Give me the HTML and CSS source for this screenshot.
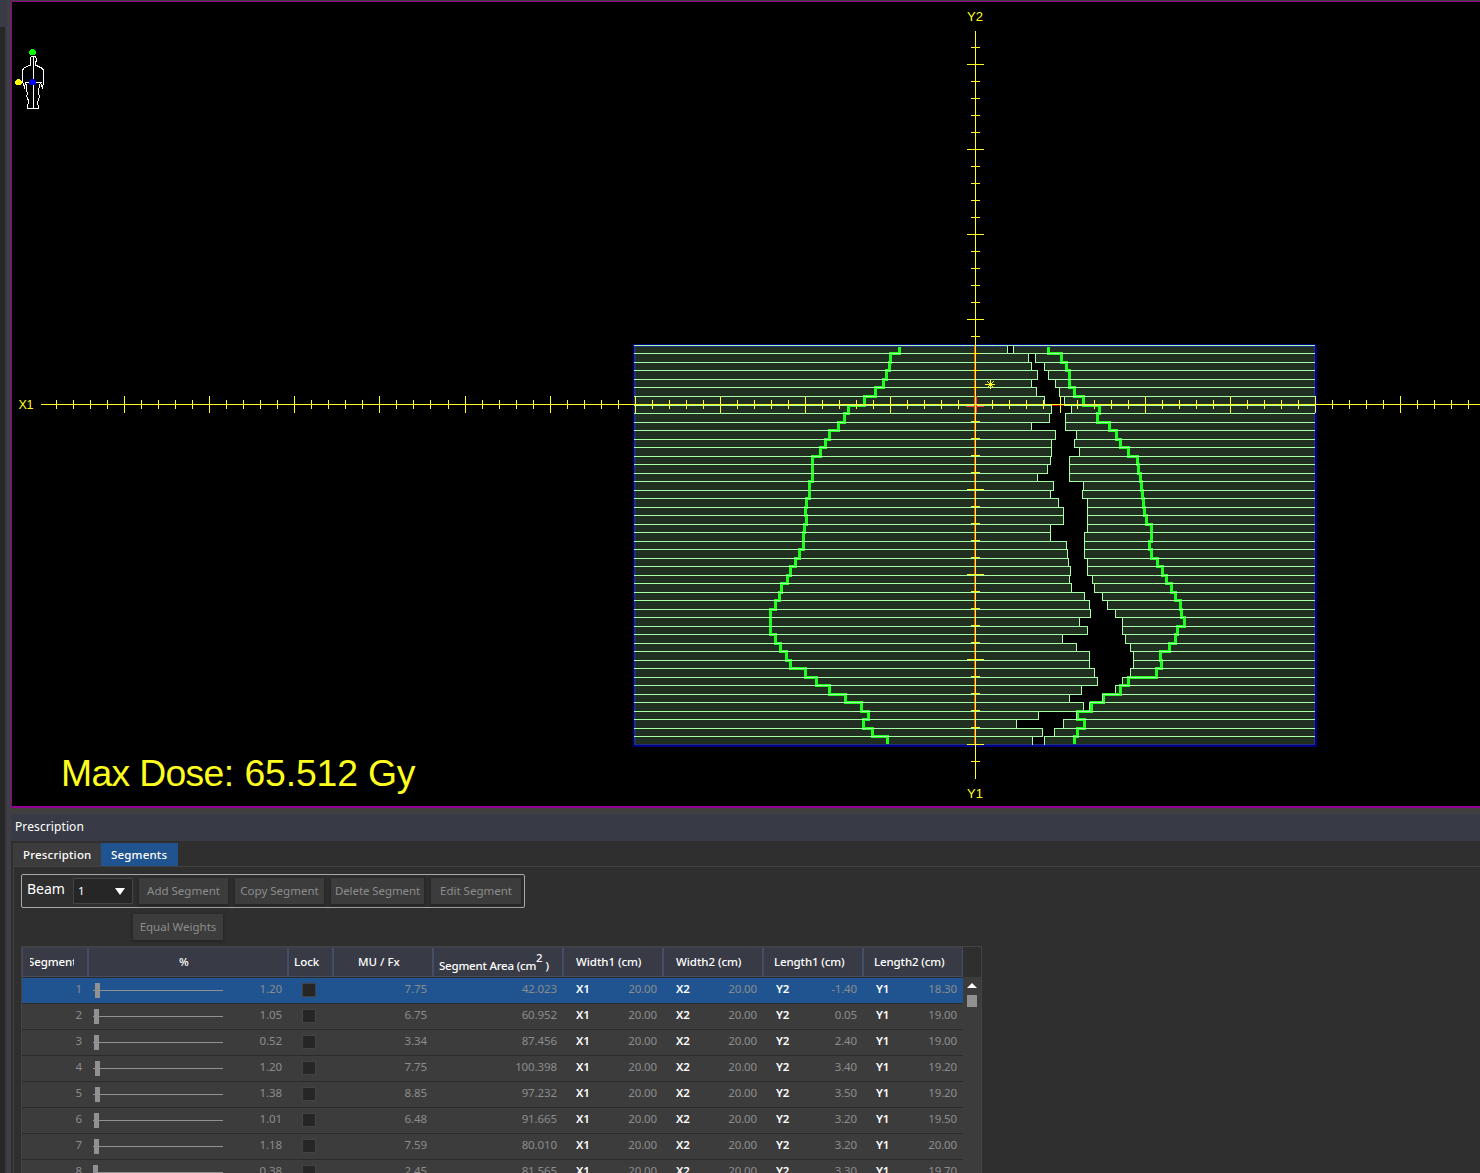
FILE: index.html
```html
<!DOCTYPE html>
<html lang="en">
<head>
<meta charset="utf-8">
<title>Prescription - Segments</title>
<link rel="stylesheet" href="styles.css">
</head>
<body>
<div class="app">
  <div class="rail"><div class="rail-head"></div></div>
  <div class="rail-edge"></div>
  <div class="gutter"></div>
  <main class="main">
    <section class="view">
      <svg class="bev" id="bev" width="1468" height="804" viewBox="12 2 1468 804"></svg>
    </section>
    <div class="splitter"></div>
    <header class="panel-title"><span class="t-title">Prescription</span></header>
    <nav class="tabs">
      <div class="tab tab-rx"><span>Prescription</span></div>
      <div class="tab tab-seg active"><span>Segments</span></div>
    </nav>
    <section class="panel">
      <div class="toolbar">
        <label class="beam-label">Beam</label>
        <div class="select"><span>1</span><svg width="10" height="7" viewBox="0 0 10 7"><path d="M0 0H10L5 7Z" fill="#fff"/></svg></div>
        <button class="btn b-add">Add Segment</button>
        <button class="btn b-copy">Copy Segment</button>
        <button class="btn b-del">Delete Segment</button>
        <button class="btn b-edit">Edit Segment</button>
      </div>
      <button class="btn b-equal">Equal Weights</button>
      <div class="table">
        <div class="grid">
          <div class="row head">
            <div class="h-seg"><span class="clip"><span>Segment</span></span></div>
            <div class="h-pct">%</div>
            <div class="h-lock">Lock</div>
            <div class="h-mu">MU / Fx</div>
            <div class="h-area">Segment Area (cm<sup>2</sup><i>)</i></div>
            <div class="h-w">Width1 (cm)</div>
            <div class="h-w">Width2 (cm)</div>
            <div class="h-l">Length1 (cm)</div>
            <div class="h-l h-last">Length2 (cm)</div>
          </div>
          <div id="rows"></div>
        </div>
        <div class="scroll">
          <div class="scroll-top"></div>
          <div class="scroll-track">
            <svg width="10" height="5" viewBox="0 0 10 5"><path d="M0 5H10L5 0Z" fill="#fff"/></svg>
            <div class="thumb"></div>
          </div>
        </div>
      </div>
    </section>
  </main>
</div>
<script src="app.js"></script>
</body>
</html>
```
FILE: styles.css
```css
* { box-sizing: border-box; }
body {
  margin: 0;
  width: 1480px;
  height: 1173px;
  overflow: hidden;
  background: #2f2f2f;
  color: #fff;
  font: 11.5px/16px "Noto Sans", "Open Sans", sans-serif;
}
.app { display: flex; height: 1173px; }
.rail { width: 5px; background: #272727; }
.rail-head { height: 27px; background: #383b45; }
.rail-edge { width: 2px; background: #383b45; }
.gutter { width: 4px; background: #403f41; }
.main { flex: 1; display: flex; flex-direction: column; min-width: 0; }
.view {
  height: 808px;
  border-top: 1px solid #404040;
  border-bottom: 1px solid #930093;
  background: #000;
  box-shadow: inset 1px 1px 0 #930093, inset 0 -1px 0 #930093;
  padding: 1px 0 0 1px;
  flex: none;
}
.bev { display: block; }
.bev text { font-family: "Liberation Sans", Arial, sans-serif; fill: #ffff1e; }
.splitter { height: 6px; flex: none; background: #404040; }
.panel-title { height: 27px; flex: none; background: #383b45; padding: 5px 0 0 4px; }
.t-title { font-size: 12px; letter-spacing: .1px; }
.tabs { height: 25px; flex: none; padding: 2px 0 0 2px; display: flex; }
.tab { height: 23px; padding-top: 4px; font-weight: 500; background: #3c3c3c; letter-spacing: .18px; }
.tab-rx { width: 88px; padding-left: 10px; }
.tab-seg { width: 77px; padding-left: 10px; }
.tab.active { background: #1f5490; }
.panel {
  flex: 1;
  margin-left: 2px;
  border-top: 1px solid #414141;
  border-left: 1px solid #414141;
  padding: 7px 0 0 7px;
  min-height: 0;
}
.toolbar {
  width: 504px;
  height: 34px;
  border: 1px solid #a8a8a8;
  border-radius: 2px;
  display: flex;
  align-items: flex-start;
  padding: 3px 0 0 5px;
}
.toolbar > * { flex: none; }
.beam-label { width: 46px; font-size: 14px; line-height: 22px; }
.select {
  width: 60px; height: 26px;
  background: #262626;
  border: 1px solid #434343;
  display: flex; align-items: center; justify-content: space-between;
  padding: 0 7px 0 4px;
  margin-right: 6px;
}
.btn {
  height: 26px;
  border: 0;
  padding: 0 0 1px;
  background: #3c3c3c;
  color: #8c8c8c;
  font: inherit;
  line-height: 25px;
  white-space: nowrap;
  box-shadow: 0 1px 2px 1px #262626;
}
.toolbar .btn { margin-right: 7px; }
.b-add, .b-copy { width: 89px; }
.b-del { width: 93px; letter-spacing: -.08px; }
.toolbar .b-edit { width: 90px; margin-right: 0; }
.b-equal { display: block; width: 90px; margin: 6px 0 6px 112px; }
.table {
  width: 961px;
  height: 260px;
  border: 1px solid #434343;
  display: flex;
}
.grid { width: 941px; }
.row {
  display: grid;
  grid-template-columns: 66px 200px 45px 100px 130px 100px 100px 100px 100px;
  height: 26px;
  border-bottom: 1px solid #2b2b2b;
  background: #3c3c3c;
  color: #8c8c8c;
}
.row.selected { background: #1f5490; }
.row.head {
  height: 31px;
  background: #383b45;
  border-left: 1px solid #454c62;
  grid-template-columns: 66px 200px 45px 100px 130px 100px 100px 100px 99px;
  border-bottom: 1px solid #2b2b2b;
  border-top: 1px solid #3f424a;
  color: #fff;
  font-weight: 500;
}
.head > div {
  border-right: 2px solid #454e66;
  border-bottom: 1px solid #454c62;
  height: 29px;
  padding-top: 6px;
  white-space: nowrap;
}
.head > .h-last { border-right-width: 1px; }
.h-seg { padding-left: 7px; }
.clip { display: block; width: 44px; overflow: hidden; }
.clip span { margin-left: -2px; letter-spacing: -.1px; }
.h-pct { padding-left: 90px; }
.h-lock { padding-left: 5px; }
.h-mu { padding-left: 24px; }
.head > .h-area { padding: 10px 0 0 5px; letter-spacing: -.22px; }
.h-area sup { font-size: 11.5px; line-height: 0; vertical-align: 8px; }
.h-area i { font-style: normal; margin-left: 3px; }
.h-w { padding-left: 12px; letter-spacing: -.05px; }
.h-l { padding-left: 10px; letter-spacing: -.12px; }
.num { text-align: right; padding: 3px 6px 0 0; letter-spacing: -.1px; }
.pct { display: flex; align-items: flex-start; padding-left: 5px; }
.slider { display: block; }
.pct .num { margin-left: auto; }
.check { width: 14px; height: 14px; margin: 5px 0 0 14px; background: #262626; border: 1px solid #434343; }
.pair { display: flex; justify-content: space-between; padding: 3px 6px 0 13px; letter-spacing: -.13px; }
.pair b { color: #fff; font-weight: 600; }
.scroll { width: 18px; }
.scroll-top { height: 30px; }
.scroll-track { height: 228px; background: #3c3c3c; padding: 6px 0 0 4px; }
.scroll-track svg { display: block; }
.thumb { width: 10px; height: 12px; margin-top: 7px; background: #919191; }
```
FILE: app.js
```js
// Leaf tips of both MLC banks and the target outline, top leaf first.
const bankL = [1007,1028,1031,1037,1031,1036,1044,1051,1049,1031,1055,1051,1051,1050,1047,1037,1053,1050,1058,1063,1063,1050,1050,1066,1067,1068,1070,1069,1071,1084,1089,1090,1079,1087,1062,1076,1089,1089,1094,1097,1081,1069,1083,1038,1016,1042,1032];
const bankR = [1013,1035,1044,1048,1055,1059,1064,1071,1065,1065,1076,1074,1079,1069,1069,1069,1083,1082,1087,1087,1087,1087,1084,1084,1084,1087,1087,1092,1094,1102,1107,1115,1122,1122,1125,1130,1133,1133,1130,1122,1115,1102,1089,1076,1063,1054,1044];
const outL = [899,890,889,886,883,875,864,848,844,838,829,825,820,812,812,812,809,809,806,805,806,804,803,803,799,795,790,787,781,779,775,770,770,770,775,780,786,790,805,816,829,845,861,868,863,872,887];
const outR = [1048,1061,1066,1069,1069,1074,1083,1099,1097,1109,1116,1120,1128,1137,1138,1140,1141,1142,1143,1144,1146,1151,1151,1149,1151,1157,1162,1166,1171,1175,1180,1181,1184,1177,1175,1169,1160,1161,1156,1128,1120,1103,1091,1077,1084,1077,1074];
const Y = i => i < 7 ? Math.floor(345 + 8.5 * i) : i === 47 ? 744 : Math.round(345 + 8.5 * i);

const rect = (x, y, w, h, c) => `<rect x="${x}" y="${y}" width="${w}" height="${h}" fill="${c}"/>`;
let s = '<g shape-rendering="crispEdges">';

// jaw border
s += rect(633, 344, 683, 402, '#00007f') + rect(633, 345, 684, 402, '#00007f');
s += rect(634, 345, 681, 400, '#1f2f86') + rect(636, 347, 678, 397, '#202f20');

// opening between the banks
bankL.forEach((l, i) => { s += rect(l + 1, Y(i) + 1, bankR[i] - l - 1, Y(i + 1) - Y(i) - (i === 46 ? 1 : 0), '#000'); });

s += rect(974, 346, 1, 399, '#ff3c32') + rect(634, 405, 681, 1, '#c00000');

// outline staircase
const stairs = a => {
  let d = `M${a[0] + .5} 347`;
  a.forEach((x, i) => { d += i ? `V${Y(i) + .5}H${x + .5}` : ''; });
  return `<path d="${d}V744" fill="none" stroke="#1eff1e" stroke-width="3"/>`;
};
s += stairs(outL) + stairs(outR);

// leaf edges
const leaf = '#a6ffa6';
for (let i = 0; i < 47; i++) {
  const l = i ? Math.max(bankL[i], bankL[i - 1]) : 1315;
  const r = i ? Math.min(bankR[i], bankR[i - 1]) : 1315;
  s += rect(634, Y(i), Math.min(l - 633, 681), 1, leaf) + rect(r, Y(i), 1315 - r, 1, leaf);
  const h = Y(i + 1) - Y(i) + 1;
  s += rect(bankL[i], Y(i), 1, h, leaf) + rect(bankR[i], Y(i), 1, h, leaf);
}

// isocenter mark
s += rect(966, 406, 18, 1, '#ff3c32') + rect(974, 396, 3, 17, '#ff3c32');

// axes with tick marks
const ye = '#ffff1e';
s += rect(41, 404, 1439, 1, ye) + rect(975, 31, 1, 748, ye);
for (let k = -54; k <= 29; k++) {
  if (!k) continue;
  const x = 975 + Math.round(17.016 * k), m = k % 5 === 0;
  s += rect(x, m ? 396 : 400, 1, m ? 17 : 9, ye);
}
for (let k = -21; k <= 21; k++) {
  if (!k) continue;
  const m = k % 5 === 0;
  s += rect(m ? 967 : 971, 404 + 17 * k, m ? 17 : 9, 1, ye);
}

// reference point
s += rect(985, 384, 10, 1, ye) + rect(990, 380, 1, 9, ye) + rect(989, 383, 3, 3, ye);
[[987,381],[988,382],[993,381],[992,382],[988,386],[987,387],[992,386],[993,387]].forEach(p => s += rect(p[0], p[1], 1, 1, ye));

// patient orientation figure
s += `<path fill="none" stroke="#fff" d="M31 56.500H35.500L36.500 59V61.500L35.500 62V65L42.500 68.500L43.500 70.500V82L42.500 87.500L40.500 83M30.500 57V65L24.500 67.500L22.500 70V82L24.500 87.500L25.500 83M25 82.500H42M33.500 56V108M26.500 84V90L27.500 94L26.500 96L28.500 100.500L27.500 108.500H38.500L37.500 102L39.500 97L38.500 92L39.500 84"/>`;
[[32.5, 52, '#00ff00'], [18.500, 82, '#ffff00'], [32.5, 82, '#0000ff']].forEach(c => s += rect(c[0] - 3.5, c[1] - 1, 7, 3, c[2]) + rect(c[0] - 2.5, c[1] - 2, 5, 5, c[2]) + rect(c[0] - 1.5, c[1] - 3, 3, 6, c[2]));
s += '</g>';
s += '<text x="967" y="21" font-size="13">Y2</text><text x="967" y="798" font-size="13">Y1</text><text x="18.500" y="409" font-size="12.5" textLength="15">X1</text>';
s += '<text x="61" y="786" font-size="37.33" textLength="173">Max Dose:</text><text x="244.500" y="786" font-size="37.33" textLength="171">65.512 Gy</text>';
document.getElementById('bev').innerHTML = s;

// segment rows: percent, slider offset, MU, area, Y2, Y1
const data = [
  ['1.20', 2, '7.75', '42.023', '-1.40', '18.30'],
  ['1.05', 1, '6.75', '60.952', '0.05', '19.00'],
  ['0.52', 1, '3.34', '87.456', '2.40', '19.00'],
  ['1.20', 2, '7.75', '100.398', '3.40', '19.20'],
  ['1.38', 2, '8.85', '97.232', '3.50', '19.20'],
  ['1.01', 1, '6.48', '91.665', '3.20', '19.50'],
  ['1.18', 1, '7.59', '80.010', '3.20', '20.00'],
  ['0.38', 0, '2.45', '81.565', '3.30', '19.70']
];
const pair = (k, v) => `<div class="pair"><b>${k}</b><span>${v}</span></div>`;
document.getElementById('rows').innerHTML = data.map((d, i) => `<div class="row${i ? '' : ' selected'}">
<div class="num">${i + 1}</div>
<div class="pct"><svg class="slider" width="130" height="25" shape-rendering="crispEdges">${rect(0, 12, 130, 1, '#919191')}${rect(d[1], 5, 5, 15, '#919191')}</svg><span class="num">${d[0]}</span></div>
<div class="check"></div><div class="num">${d[2]}</div><div class="num">${d[3]}</div>
${pair('X1', '20.00')}${pair('X2', '20.00')}${pair('Y2', d[4])}${pair('Y1', d[5])}</div>`).join('');
```
